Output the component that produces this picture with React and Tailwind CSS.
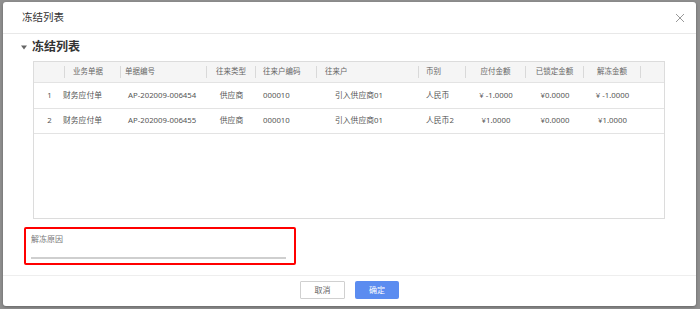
import React from "react";

const FONT = { fontFamily: '"Noto Sans", "Noto Sans CJK SC", sans-serif' };

const COLS = "grid-cols-[31px_56px_86px_49px_61px_102px_47px_60px_58px_57px_1fr]";

const headers = [
  { label: "", cls: "justify-center" },
  { label: "业务单据", cls: "pl-[8px]" },
  { label: "单据编号", cls: "pl-[4px]" },
  { label: "往来类型", cls: "justify-center" },
  { label: "往来户编码", cls: "pl-[7px]" },
  { label: "往来户", cls: "pl-[8px]" },
  { label: "币别", cls: "pl-[7px]" },
  { label: "应付金额", cls: "justify-center" },
  { label: "已锁定金额", cls: "justify-center" },
  { label: "解冻金额", cls: "justify-center" },
];

const rows = [
  ["1", "财务应付单", "AP-202009-006454", "供应商", "000010", "引入供应商01", "人民币", "¥ -1.0000", "¥0.0000", "¥ -1.0000"],
  ["2", "财务应付单", "AP-202009-006455", "供应商", "000010", "引入供应商01", "人民币2", "¥1.0000", "¥0.0000", "¥1.0000"],
];

const cellCls = [
  "text-center",
  "ml-[-2px]",
  "pl-[7px]",
  "text-center",
  "pl-[7px]",
  "pl-[18px]",
  "pl-[7px]",
  "text-center",
  "text-center",
  "text-center",
];

export default function App() {
  return (
    <div className="w-[700px] h-[309px] bg-[#8f8f8f] pt-[2px] pl-[3px] overflow-hidden" style={FONT}>
      <div className="w-[693px] h-[304px] bg-white rounded-[3px] flex flex-col shadow-[0_1px_3px_rgba(0,0,0,0.3)]">
        {/* header */}
        <div className="h-[32px] border-b border-[#e8e8e8] flex items-center justify-between pl-[19px] pr-[11px]">
          <span className="text-[10.5px] text-[#333]">冻结列表</span>
          <svg width="10" height="10" viewBox="0 0 10 10" className="text-[#999]">
            <path d="M1 1L9 9M9 1L1 9" stroke="currentColor" strokeWidth="1" />
          </svg>
        </div>

        {/* section title */}
        <div className="mt-[6px] h-[14px] flex items-center pl-[18px] gap-[5px]">
          <svg width="6" height="5" viewBox="0 0 6 5">
            <polygon points="0,0.5 6,0.5 3,4.5" fill="#666" />
          </svg>
          <span className="text-[12px] font-bold text-[#333]">冻结列表</span>
        </div>

        {/* table */}
        <div className="mt-[7px] ml-[30px] w-[632px] h-[158px] border border-[#dcdcdc] text-[7.5px] text-[#666]">
          <div className={`grid ${COLS} h-[21px] bg-[#f5f5f5] border-b border-[#e3e3e3]`}>
            {headers.map((h, i) => (
              <div key={i} className="flex items-center">
                <span className={`flex-1 flex ${h.cls}`}>{h.label}</span>
                <span className="w-px h-[12px] bg-[#d9d9d9]" />
              </div>
            ))}
            <div />
          </div>
          {rows.map((r, ri) => (
            <div key={ri} className={`grid ${COLS} ${ri === 0 ? "h-[26px]" : "h-[25px]"} border-b border-[#e3e3e3] items-center text-[7.8px] text-[#555]`}>
              {r.map((c, ci) => (
                <div key={ci} className={`whitespace-nowrap ${cellCls[ci]}`}>
                  {c}
                </div>
              ))}
              <div />
            </div>
          ))}
        </div>

        {/* reason box */}
        <div className="mt-[8px] ml-[21px] w-[272px] h-[38px] border-2 border-[#f00] rounded-[2px] pl-[5px] pr-[8px] pt-[4px]">
          <div className="text-[8px] text-[#777] leading-[12px]">解冻原因</div>
          <div className="mt-[12px] h-[2px] bg-[#cfcfcf]" />
        </div>

        {/* footer */}
        <div className="mt-[10px] flex-1 border-t border-[#eeeeee] flex justify-center gap-[10px] pt-[5px]">
          <button className="w-[45px] h-[18px] border border-[#d0d0d0] bg-white text-[8px] text-[#666] rounded-[1px]">
            取消
          </button>
          <button className="w-[44px] h-[18px] bg-[#5b8cf0] text-[8px] text-white rounded-[2px]">
            确定
          </button>
        </div>
      </div>
    </div>
  );
}
